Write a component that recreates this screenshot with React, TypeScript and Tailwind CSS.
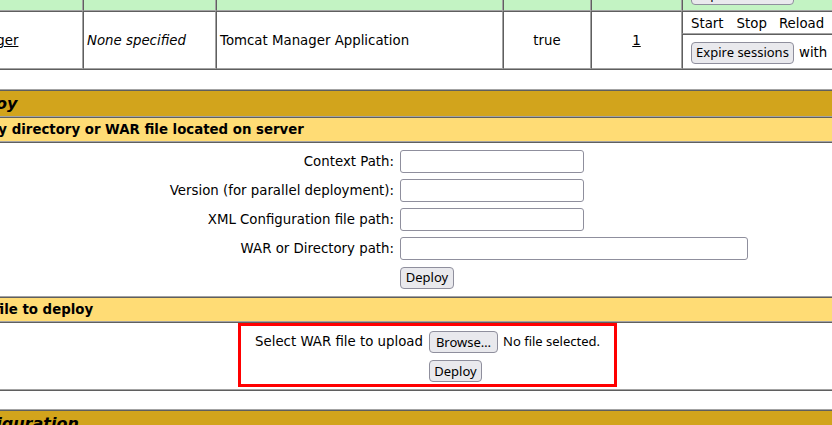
import React from 'react';

// inset cell border (Firefox table border="1" look)
const cell = "border border-t-[#5f5f5f] border-l-[#5f5f5f] border-b-[#a3a3a3] border-r-[#a3a3a3]";
const outer = "border border-t-[#a3a3a3] border-l-[#a3a3a3] border-b-[#5f5f5f] border-r-[#5f5f5f]";
const btn = "flex h-[22px] items-center justify-center rounded-[4px] border border-[#8f8f9d] bg-[#e9e9ed] font-['Noto_Sans',sans-serif] text-[13px] leading-none text-black whitespace-nowrap";
const field = "h-[23px] rounded-[3px] border border-[#8f8f9d] bg-white";

function FormRow({ label, width }: { label: string; width: string }) {
  return (
    <div className="flex h-[29px] items-center">
      <div className="w-[445px] pr-[3px] pt-[1px] text-right">{label}</div>
      <div className="pl-[3px]">
        <div className={`${field} ${width}`} />
      </div>
    </div>
  );
}

export default function App() {
  return (
    <div className="h-[425px] w-[832px] overflow-hidden bg-white font-['DejaVu_Sans',sans-serif] text-[13.33px] text-black">
      <div className="-ml-[50px] w-[1100px]">
        {/* applications list (bottom of it) */}
        <div className="border-b border-b-[#5f5f5f]">
          <div className="grid grid-cols-[133px_133px_287px_88px_91px_1fr] grid-rows-[11px_23px_35px]">
            <div className={`${cell} border-t-0 bg-[#c3f3c3]`} />
            <div className={`${cell} border-t-0 bg-[#c3f3c3]`} />
            <div className={`${cell} border-t-0 bg-[#c3f3c3]`} />
            <div className={`${cell} border-t-0 bg-[#c3f3c3]`} />
            <div className={`${cell} border-t-0 bg-[#c3f3c3]`} />
            <div className={`${cell} border-t-0 overflow-hidden bg-[#c3f3c3] pl-[8px]`}>
              <div className={`${btn} -mt-[17px] w-[103px]`}>Expire sessions</div>
            </div>

            <div className={`${cell} row-span-2 flex items-center pl-[3px] pt-[2px]`}>
              <span className="underline">/manager</span>
            </div>
            <div className={`${cell} row-span-2 flex items-center pl-[3px] pt-[2px] italic`}>None specified</div>
            <div className={`${cell} row-span-2 flex items-center pl-[3px] pt-[2px]`}>Tomcat Manager Application</div>
            <div className={`${cell} row-span-2 flex items-center justify-center pt-[2px]`}>true</div>
            <div className={`${cell} row-span-2 flex items-center justify-center pt-[2px]`}>
              <span className="underline">1</span>
            </div>
            <div className={`${cell} flex items-center whitespace-nowrap pl-[8px] pt-[2px]`}>
              <span>Start</span>
              <span className="ml-[13px]">Stop</span>
              <span className="ml-[12px]">Reload</span>
              <span className="ml-[12px]">Undeploy</span>
            </div>
            <div className={`${cell} flex items-center whitespace-nowrap pl-[8px] pt-[2px]`}>
              <div className={`${btn} w-[103px]`}>Expire sessions</div>
              <span className="ml-[5px]">with idle ≥</span>
            </div>
          </div>
        </div>

        {/* Deploy */}
        <div className={`${outer} mt-[19px]`}>
          <div className={`${cell} flex h-[27px] items-center bg-[#d2a41c] pl-[3px] text-[16px] font-bold italic`}>Deploy</div>
          <div className={`${cell} flex h-[25px] items-center bg-[#ffdc75] pl-[3px] font-bold`}>
            Deploy directory or WAR file located on server
          </div>
          <div className={`${cell} h-[155px] pt-[4px]`}>
            <FormRow label="Context Path:" width="w-[184px]" />
            <FormRow label="Version (for parallel deployment):" width="w-[184px]" />
            <FormRow label="XML Configuration file path:" width="w-[184px]" />
            <FormRow label="WAR or Directory path:" width="w-[348px]" />
            <div className="flex h-[29px] items-center">
              <div className="w-[445px]" />
              <div className="pl-[3px]">
                <div className={`${btn} w-[54px]`}>Deploy</div>
              </div>
            </div>
          </div>
          <div className={`${cell} flex h-[25px] items-center bg-[#ffdc75] pl-[3px] font-bold`}>WAR file to deploy</div>
          <div className={`${cell} h-[68px]`}>
            <div className="ml-[286px] h-[64px] w-[379px] border-[3px] border-[#ff0000]">
              <div className="mt-[5px] flex h-[22px] items-center">
                <div className="w-[185px] pr-[3px] text-right whitespace-nowrap">Select WAR file to upload</div>
                <div className="flex items-center pl-[3px]">
                  <div className={`${btn} w-[69px]`}>Browse…</div>
                  <span className="ml-[5px] font-['Noto_Sans',sans-serif] text-[13px]">No file selected.</span>
                </div>
              </div>
              <div className="mt-[7px] flex h-[22px] items-center">
                <div className="w-[185px]" />
                <div className="pl-[3px]">
                  <div className={`${btn} w-[53px]`}>Deploy</div>
                </div>
              </div>
            </div>
          </div>
        </div>

        {/* Configuration */}
        <div className={`${outer} mt-[18px]`}>
          <div className={`${cell} flex h-[27px] items-center bg-[#d2a41c] pl-[3px] text-[16px] font-bold italic`}>Configuration</div>
        </div>
      </div>
    </div>
  );
}
